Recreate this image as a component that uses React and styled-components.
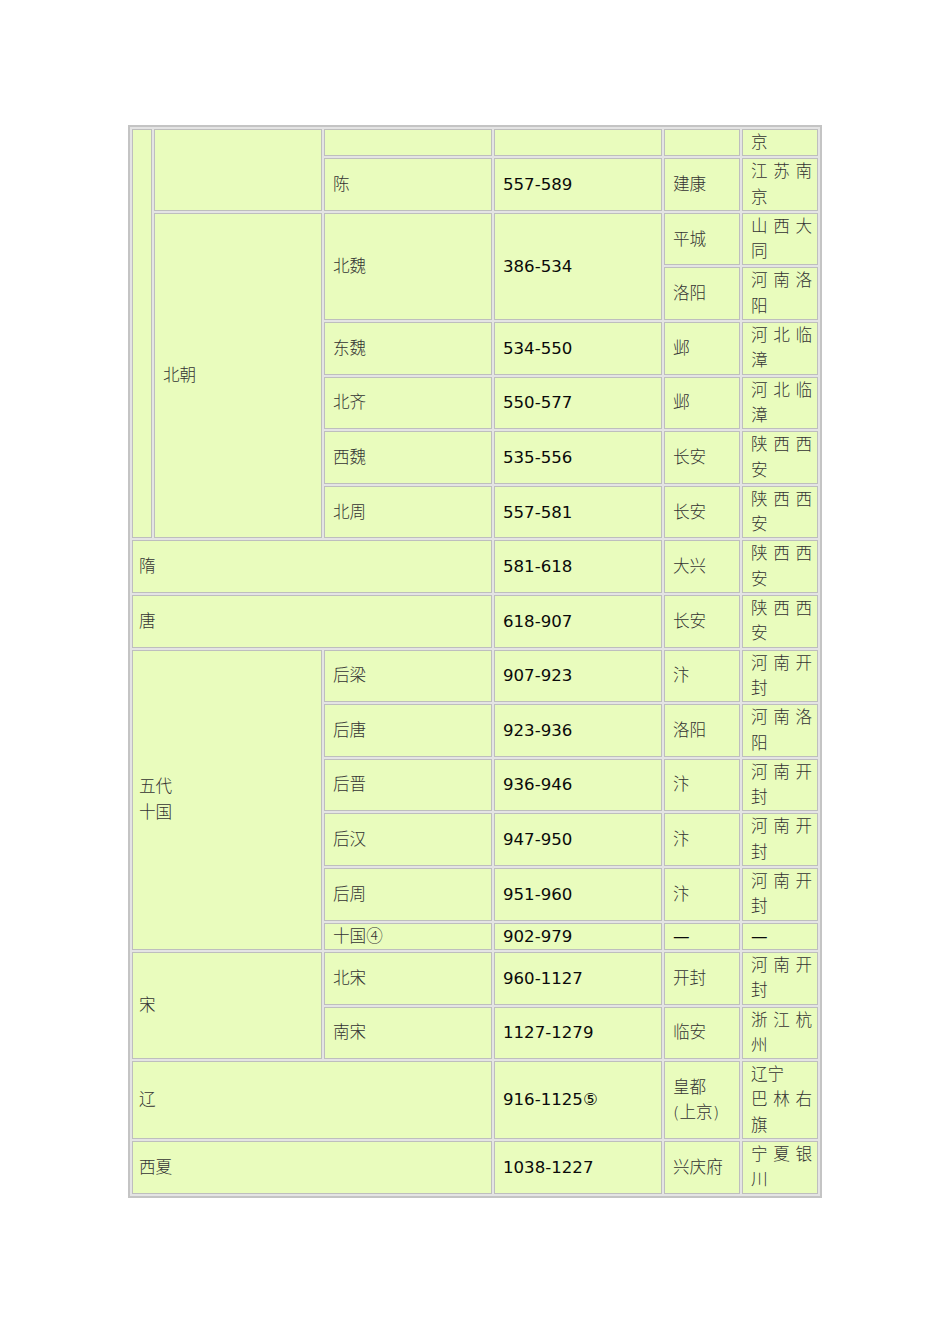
import React from "react";
import styled, { createGlobalStyle } from "styled-components";

const GlobalStyle = createGlobalStyle`
  html, body {
    margin: 0;
    padding: 0;
    background: #fff;
  }
`;

const Page = styled.div`
  padding: 125px 0 0 128px;
  width: 950px;
  box-sizing: border-box;
`;

const Table = styled.table`
  width: 694px;
  table-layout: fixed;
  border-collapse: separate;
  border-spacing: 2px;
  border: 2px solid #c4c4c4;
  background: #e4e4e4;
  font-family: "DejaVu Sans", "Noto Sans CJK SC", sans-serif;
  font-size: 16.6px;
  line-height: 25.3px;
  color: #333;
`;

const Col = styled.col`
  width: ${({ $w }) => $w}px;
`;

const Cell = styled.td`
  background: #e9fcbd;
  border: 1px solid #bebebe;
  vertical-align: middle;
  padding: ${({ $blank, $lead }) =>
    $blank ? "0" : $lead ? "0 5px 0 6px" : "0 5px 0 8px"};
  text-align: ${({ $justify }) => ($justify ? "justify" : "left")};
  color: ${({ $num }) => ($num ? "#0a0a0a" : "#333")};
  font-weight: ${({ $num }) => ($num ? 400 : 300)};
  overflow: hidden;
`;

// column widths: group | sub-group | dynasty | years | capital | today
const cols = [20, 168, 168, 168, 76, 76];

const c = (text, opts = {}) => ({ text, ...opts });
const yr = (text) => ({ text, num: true });
const place = (text) => ({ text, justify: true });

const rows = [
  [c("", { rowSpan: 8, blank: true }), c("", { rowSpan: 2 }), c(""), c(""), c(""), place("京")],
  [c("陈"), yr("557-589"), c("建康"), place("江苏南京")],
  [c("北朝", { rowSpan: 6 }), c("北魏", { rowSpan: 2 }), { text: "386-534", rowSpan: 2, num: true }, c("平城"), place("山西大同")],
  [c("洛阳"), place("河南洛阳")],
  [c("东魏"), yr("534-550"), c("邺"), place("河北临漳")],
  [c("北齐"), yr("550-577"), c("邺"), place("河北临漳")],
  [c("西魏"), yr("535-556"), c("长安"), place("陕西西安")],
  [c("北周"), yr("557-581"), c("长安"), place("陕西西安")],
  [c("隋", { colSpan: 3, lead: true }), yr("581-618"), c("大兴"), place("陕西西安")],
  [c("唐", { colSpan: 3, lead: true }), yr("618-907"), c("长安"), place("陕西西安")],
  [c(["五代", "十国"], { colSpan: 2, rowSpan: 6, lead: true }), c("后梁"), yr("907-923"), c("汴"), place("河南开封")],
  [c("后唐"), yr("923-936"), c("洛阳"), place("河南洛阳")],
  [c("后晋"), yr("936-946"), c("汴"), place("河南开封")],
  [c("后汉"), yr("947-950"), c("汴"), place("河南开封")],
  [c("后周"), yr("951-960"), c("汴"), place("河南开封")],
  [c("十国④"), yr("902-979"), yr("—"), yr("—")],
  [c("宋", { colSpan: 2, rowSpan: 2, lead: true }), c("北宋"), yr("960-1127"), c("开封"), place("河南开封")],
  [c("南宋"), yr("1127-1279"), c("临安"), place("浙江杭州")],
  [c("辽", { colSpan: 3, lead: true }), yr("916-1125⑤"), c(["皇都", "(上京)"]), { text: ["辽宁", "巴林右旗"], justify: true }],
  [c("西夏", { colSpan: 3, lead: true }), yr("1038-1227"), c("兴庆府"), place("宁夏银川")],
];

function CellText({ text }) {
  if (!Array.isArray(text)) return text;
  return text.map((line, i) => (
    <React.Fragment key={i}>
      {i > 0 && <br />}
      {line}
    </React.Fragment>
  ));
}

export default function App() {
  return (
    <Page>
      <GlobalStyle />
      <Table>
        <colgroup>
          {cols.map((w, i) => (
            <Col key={i} $w={w} />
          ))}
        </colgroup>
        <tbody>
          {rows.map((row, ri) => (
            <tr key={ri}>
              {row.map((cell, ci) => (
                <Cell
                  key={ci}
                  rowSpan={cell.rowSpan}
                  colSpan={cell.colSpan}
                  $blank={cell.blank}
                  $lead={cell.lead}
                  $justify={cell.justify}
                  $num={cell.num}
                >
                  <CellText text={cell.text} />
                </Cell>
              ))}
            </tr>
          ))}
        </tbody>
      </Table>
    </Page>
  );
}
